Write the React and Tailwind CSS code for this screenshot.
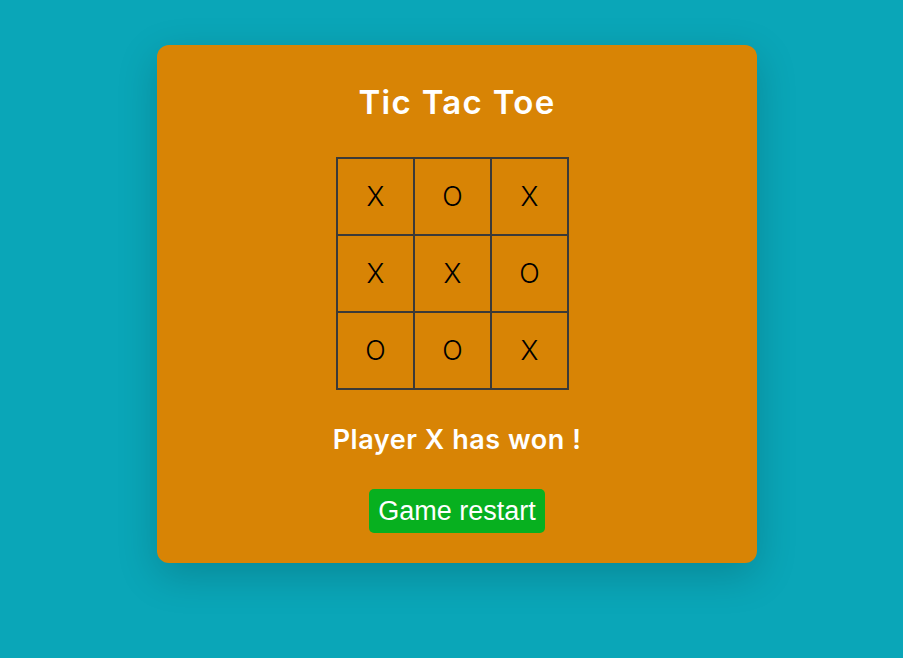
const board = ['X', 'O', 'X', 'X', 'X', 'O', 'O', 'O', 'X'];

function Cell({ value }) {
  return (
    <div className="flex h-[75px] w-[75px] items-center justify-center bg-[#d88405] text-[27px] font-light leading-none text-black">
      {value}
    </div>
  );
}

export default function App() {
  return (
    <div className="min-h-[658px] bg-[#0aa6b8] pt-[45px] font-['Inter',sans-serif]">
      <div className="flex justify-center pl-[11px]">
        <div className="flex w-[600px] flex-col items-center rounded-xl bg-[#d88405] pb-[30px] pt-[33px] shadow-[0_12px_40px_rgba(0,0,0,0.18)]">
          <h1 className="text-[33px] font-semibold leading-[48px] tracking-[0.04em] text-white">Tic Tac Toe</h1>

          <div className="mt-[31px] pr-[9px]">
            <div className="grid grid-cols-[75px_75px_75px] gap-[2px] bg-[#3b3a38] p-[2px]">
              {board.map((v, i) => (
                <Cell key={i} value={v} />
              ))}
            </div>
          </div>

          <h2 className="mt-[31px] text-[27px] font-semibold leading-[38px] tracking-[0.02em] text-white">
            Player X has won !
          </h2>

          <button className="mt-[30px] rounded-[5px] bg-[#07b01f] px-[9px] py-[6px] font-['Liberation_Sans',Arial,sans-serif] text-[27px] leading-[32px] text-white">
            Game restart
          </button>
        </div>
      </div>
    </div>
  );
}
